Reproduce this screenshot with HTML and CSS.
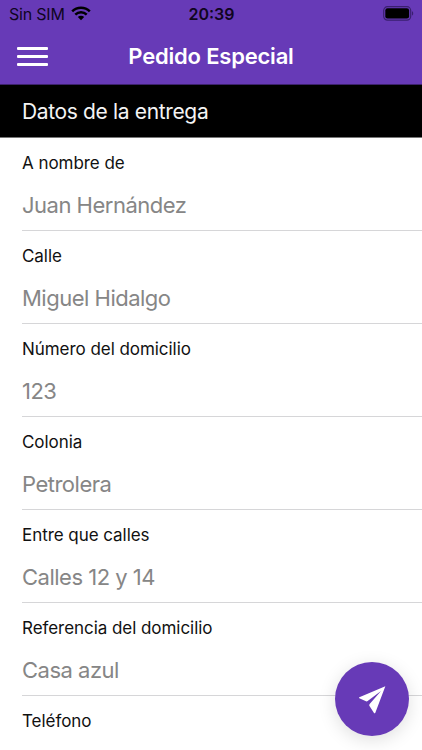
FILE: index.html
```html
<!DOCTYPE html>
<html lang="es">
<head>
    <meta charset="UTF-8">
    <meta name="viewport" content="width=device-width, initial-scale=1.0">
    <title>Pedido Especial</title>
    <link rel="stylesheet" href="styles.css">
</head>
<body>
    <header class="header">
        <div class="status-bar">
            <div class="carrier">
                <span>Sin SIM</span>
                <svg class="wifi" viewBox="0 0 20 15">
                    <path d="M1.2 5.4a12.6 12.6 0 0 1 17.6 0M4.3 8.6a8.1 8.1 0 0 1 11.4 0" fill="none" stroke="currentColor" stroke-width="2.5"/>
                    <path d="M10 14.3l-3.2-3.2a4.6 4.6 0 0 1 6.4 0z" fill="currentColor"/>
                </svg>
            </div>
            <span class="time">20:39</span>
            <svg class="battery" viewBox="0 0 31 15">
                <rect x="0.7" y="0.7" width="27" height="13.4" rx="3.8" fill="none" stroke="#3a1f70" stroke-width="1.2"/>
                <rect x="2.3" y="2.3" width="23.8" height="10.2" rx="2.2" fill="#000"/>
                <path d="M29 5.2c1.6.6 1.6 3.8 0 4.4z" fill="#3a1f70"/>
            </svg>
        </div>
        <div class="toolbar">
            <button class="menu-button" aria-label="Menú">
                <span></span>
                <span></span>
                <span></span>
            </button>
            <h1>Pedido Especial</h1>
        </div>
    </header>

    <h2 class="divider">Datos de la entrega</h2>

    <form class="list">
        <div class="item">
            <label for="nombre">A nombre de</label>
            <input type="text" id="nombre" placeholder="Juan Hernández">
        </div>
        <div class="item">
            <label for="calle">Calle</label>
            <input type="text" id="calle" placeholder="Miguel Hidalgo">
        </div>
        <div class="item">
            <label for="numero">Número del domicilio</label>
            <input type="text" id="numero" placeholder="123">
        </div>
        <div class="item">
            <label for="colonia">Colonia</label>
            <input type="text" id="colonia" placeholder="Petrolera">
        </div>
        <div class="item">
            <label for="entre">Entre que calles</label>
            <input type="text" id="entre" placeholder="Calles 12 y 14">
        </div>
        <div class="item">
            <label for="referencia">Referencia del domicilio</label>
            <input type="text" id="referencia" placeholder="Casa azul">
        </div>
        <div class="item item-last">
            <label for="telefono">Teléfono</label>
        </div>
    </form>

    <button class="fab" aria-label="Enviar">
        <svg viewBox="0 0 90 90">
            <path d="M85 4L7 37q-2 2 0 3l20 9q3 1 5-1L72 18L38 57q-2 3-1 5l14 22q2 2 4-1z" fill="#fff"/>
        </svg>
    </button>
</body>
</html>
```

FILE: styles.css
```css
* {
    box-sizing: border-box;
}
body {
    margin: 0;
    height: 750px;
    overflow: hidden;
    background: #fff;
    color: #111;
    font-family: Inter, "Liberation Sans", sans-serif;
}
.header {
    height: 85px;
    background: #673ab7;
    border-bottom: 1px solid #3d226d;
}
.status-bar {
    display: grid;
    grid-template-columns: 1fr auto 1fr;
    align-items: center;
    height: 28px;
    padding: 0 8px 0 9px;
    color: #10051f;
    font-size: 16px;
}
.carrier {
    display: flex;
    align-items: center;
    gap: 6px;
    letter-spacing: -0.2px;
}
.wifi {
    width: 20px;
    height: 15px;
    margin-top: -1px;
    color: #000;
}
.time {
    font-weight: 600;
}
.battery {
    width: 31px;
    height: 15px;
    margin-top: -1px;
    justify-self: end;
}
.toolbar {
    display: grid;
    grid-template-columns: 48px 1fr 48px;
    align-items: center;
    height: 56px;
}
.menu-button {
    display: flex;
    flex-direction: column;
    gap: 5px;
    width: 48px;
    padding: 1px 0 0 17px;
    border: none;
    background: none;
}
.menu-button span {
    width: 31px;
    height: 2.7px;
    border-radius: 1px;
    background: #fff;
}
h1 {
    margin: 0;
    color: #fff;
    font-size: 22px;
    font-weight: 600;
    letter-spacing: -0.2px;
    text-align: center;
}
.divider {
    margin: 0;
    height: 53px;
    padding-left: 22px;
    border-bottom: 1px solid #777;
    background: #000;
    color: #f4f4f4;
    font-size: 21px;
    font-weight: 400;
    line-height: 54px;
    letter-spacing: -0.35px;
}
.item {
    display: flex;
    flex-direction: column;
    height: 93px;
    margin-left: 22px;
    border-bottom: 1px solid #d6d6d8;
}
.item-last {
    height: 54px;
    border-bottom: none;
}
label {
    padding-top: 13px;
    font-size: 17px;
    line-height: 24px;
    letter-spacing: -0.05px;
}
input {
    width: 100%;
    height: 55px;
    padding: 5px 0 0;
    border: none;
    outline: none;
    background: none;
    font-family: inherit;
    font-size: 22px;
    letter-spacing: -0.5px;
}
input::placeholder {
    color: #868686;
}
.fab {
    position: absolute;
    top: 662px;
    left: 335px;
    display: flex;
    align-items: center;
    justify-content: center;
    width: 74px;
    height: 74px;
    padding: 2px 0 0;
    border: none;
    border-radius: 50%;
    background: #673ab7;
    box-shadow: 0 4px 18px rgba(0, 0, 0, 0.13);
}
.fab svg {
    width: 30px;
    height: 30px;
}
```
